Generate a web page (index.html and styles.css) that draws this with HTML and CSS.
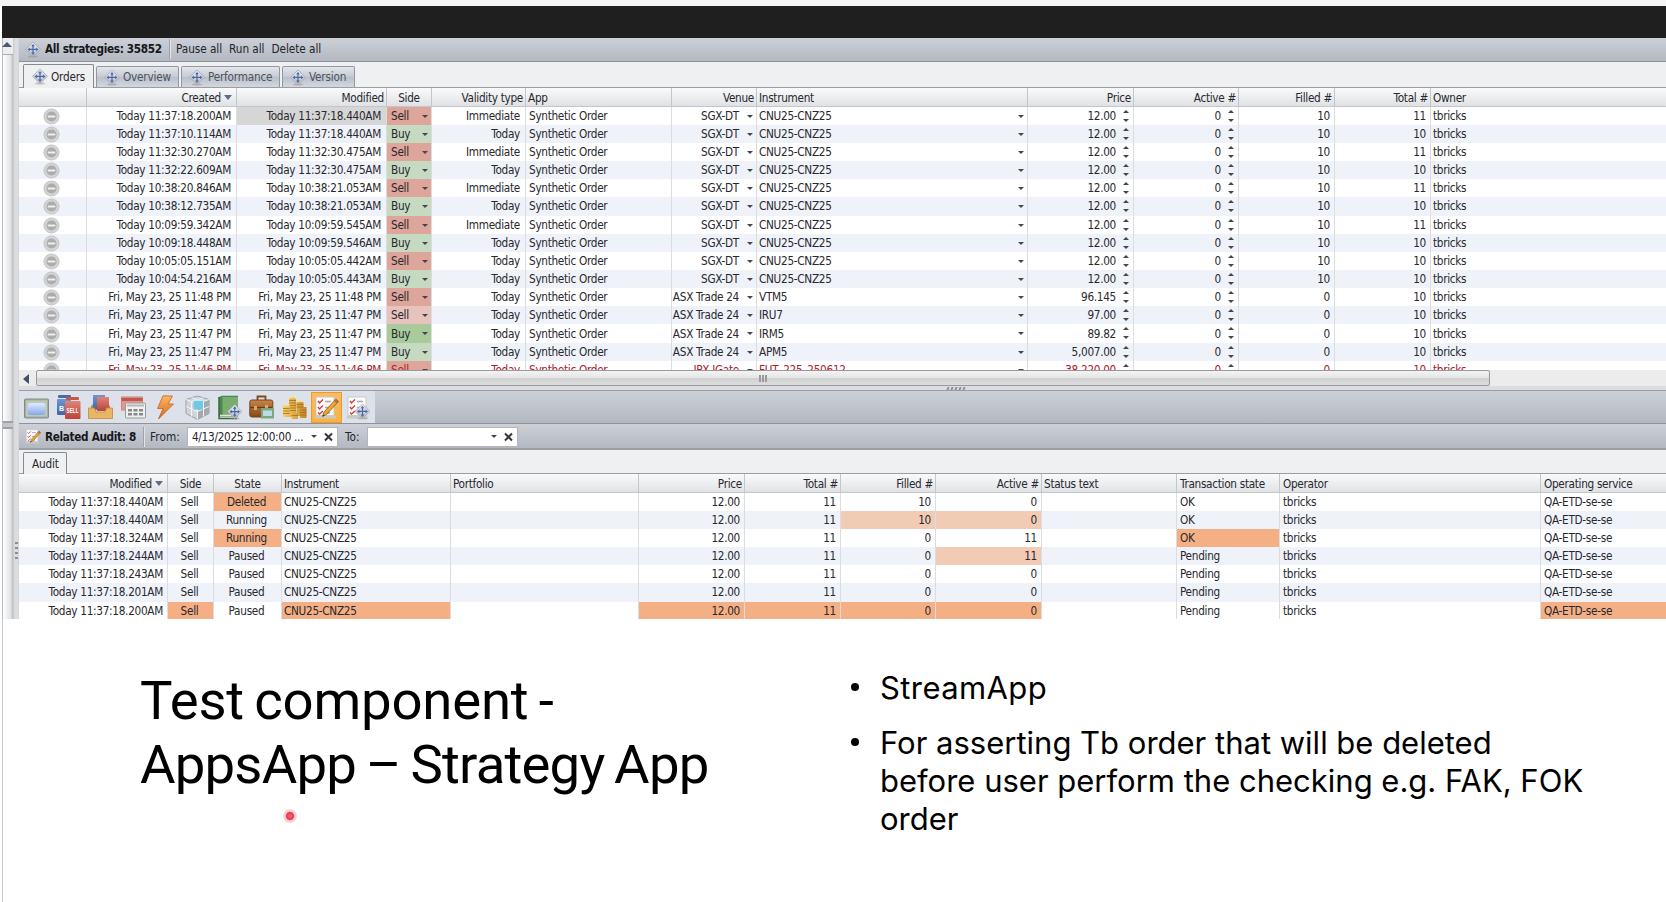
FILE: index.html
```html
<!DOCTYPE html>
<html lang="en">
<head>
<meta charset="utf-8">
<title>Test component - AppsApp – Strategy App</title>
<link rel="stylesheet" href="styles.css">
</head>
<body>
<svg class="defs" aria-hidden="true">
  <defs>
    <linearGradient id="gGray" x1="0" y1="0" x2="0" y2="1"><stop offset="0" stop-color="#eceef0"/><stop offset="1" stop-color="#b4b7bc"/></linearGradient>
    <linearGradient id="gRed" x1="0" y1="0" x2="0" y2="1"><stop offset="0" stop-color="#e08478"/><stop offset="1" stop-color="#bb4238"/></linearGradient>
    <linearGradient id="gBlue" x1="0" y1="0" x2="0" y2="1"><stop offset="0" stop-color="#7295d0"/><stop offset="1" stop-color="#3f66ae"/></linearGradient>
    <linearGradient id="gGold" x1="0" y1="0" x2="1" y2="0"><stop offset="0" stop-color="#f6cf6a"/><stop offset="1" stop-color="#c48722"/></linearGradient>
    <linearGradient id="gBolt" x1="0" y1="0" x2="0" y2="1"><stop offset="0" stop-color="#ffb765"/><stop offset="1" stop-color="#d4661b"/></linearGradient>
    <linearGradient id="gSky" x1="0" y1="0" x2="0" y2="1"><stop offset="0" stop-color="#e0ebff"/><stop offset="1" stop-color="#84a8ea"/></linearGradient>
    <linearGradient id="gBrown" x1="0" y1="0" x2="0" y2="1"><stop offset="0" stop-color="#c8854a"/><stop offset="1" stop-color="#834718"/></linearGradient>
  </defs>
  <symbol id="move" viewBox="0 0 16 16">
    <ellipse cx="8" cy="15" rx="5" ry="1" fill="#888" opacity=".45"/>
    <path d="M8 .5 15.500 7.800 8 15.100 .5 7.800Z" fill="url(#gGray)" stroke="#a3a7ad" stroke-width=".8" stroke-linejoin="round"/>
    <path d="M8 4.200v7.400M4.200 7.900h7.600" stroke="#4868b0" stroke-width="1.200"/>
    <path d="M8 2.400 9.900 4.800H6.100ZM8 13.400 6.100 11H9.900ZM2.500 7.900 4.900 6v3.800ZM13.500 7.900 11.100 6v3.800Z" fill="#4868b0"/>
  </symbol>
  <symbol id="checklist" viewBox="0 0 25 25">
    <path d="M2 2h18v18.500H2Z" fill="#fbfbfb" stroke="#c3c3c3" stroke-width=".8"/>
    <path d="M1 20.500h20l1.500 3H.5Z" fill="#c9c9c9"/>
    <path d="M4 6l1.500 2L9 4.500M4 12l1.500 2L9 10.500M4 17.500l1.500 1.500L9 16" fill="none" stroke="#cc3d38" stroke-width="1.300"/>
    <path d="M11 6.500h6M11 12.500h6M11 18h5" stroke="#a7a7ab" stroke-width="1.500"/>
  </symbol>
  <symbol id="pencil" viewBox="0 0 25 25">
    <path d="M22 4l2.500 2.500L12.500 19.500 8.500 21.500 10 17Z" fill="#eda52f" stroke="#8a5a1c" stroke-width=".8"/>
    <path d="M22 4l2.500 2.500-2 2L20 6Z" fill="#b76b4f"/>
    <path d="M8.500 21.500l.6-1.900 1.500 1Z" fill="#333"/>
  </symbol>
  <symbol id="blocked" viewBox="0 0 18 18">
    <circle cx="9" cy="9" r="8.300" fill="#d4d4d4"/><circle cx="9" cy="9" r="8" fill="none" stroke="#c2c2c2" stroke-width=".8"/>
    <circle cx="9" cy="9" r="5.400" fill="#acacac"/><path d="M5 9h8" stroke="#f1f1f1" stroke-width="2"/>
  </symbol>
</svg>

<div class="edge"></div>
<div class="titlebar"></div>

<div class="app">
  <div class="rail">
    <div class="rail-scroll"><div class="rail-up"></div><div class="rail-thumb"></div></div>
    <div class="rail-split"><i></i><i></i><i></i><i></i></div>
  </div>
  <div class="main">
    <div class="bar bar-top">
      <svg class="ico16"><use href="#move"/></svg>
      <b class="bar-title">All strategies: 35852</b>
      <span class="sep"></span>
      <span class="link">Pause all</span><span class="link">Run all</span><span class="link">Delete all</span>
    </div>
    <div class="tabs">
      <div class="tab on t-orders"><svg class="ico16"><use href="#move"/></svg>Orders</div>
      <div class="tab t-over"><svg class="ico16"><use href="#move"/></svg>Overview</div>
      <div class="tab t-perf"><svg class="ico16"><use href="#move"/></svg>Performance</div>
      <div class="tab t-ver"><svg class="ico16"><use href="#move"/></svg>Version</div>
    </div>
    <div class="grid orders" id="orders"></div>
    <div class="hscroll"><span class="arrow-left"></span><div class="thumb"><i></i><i></i><i></i></div></div>
    <div class="splitter"><i></i><i></i><i></i><i></i><i></i></div>
    <div class="toolbar">
      <div class="tools">
        <svg viewBox="0 0 25 25"><rect x=".5" y="4" width="24" height="19" rx="1" fill="#a4ad9f" stroke="#858b87"/><rect x="2" y="5.500" width="21" height="16" fill="#bdcbb5"/><rect x="3.500" y="8" width="18" height="12" rx="3" fill="url(#gSky)"/></svg>
        <svg viewBox="0 0 25 25"><rect x="2" y="0" width="13" height="3" rx="1" fill="#446cb3"/><rect x="1" y="4" width="14" height="16" rx="1" fill="url(#gBlue)"/><rect x="10" y="2" width="13" height="3" rx="1" fill="#c5564b"/><rect x="9" y="6" width="15.500" height="18" rx="1" fill="url(#gRed)"/><text x="3" y="16" class="tag">B</text><text x="10.600" y="18" class="tag" textLength="12" lengthAdjust="spacingAndGlyphs">SELL</text></svg>
        <svg viewBox="0 0 25 25"><path d="M3 11 5 9h15l2 2v4H3Z" fill="#c18a3d"/><rect x="5" y="0" width="12" height="14" fill="url(#gBlue)"/><rect x="9" y="2" width="12" height="14" fill="url(#gRed)"/><path d="M.5 13h6l1.500 4h9l1.500-4h6v10.500H.5Z" fill="#e9b566" stroke="#c08a3f" stroke-width=".8"/></svg>
        <svg viewBox="0 0 25 25"><rect x=".5" y="2" width="21" height="13" fill="#df9990" stroke="#c8877f"/><path d="M.5 4.500h21" stroke="#c6554d" stroke-width="3"/><rect x="4.500" y="8" width="20" height="15" rx="1" fill="#f0f0f0" stroke="#999"/><path d="M6 10.500h17" stroke="#b7b7b7" stroke-width="2"/><path d="M7 14h4v2.500H7zM12.500 14h4v2.500h-4zM18 14h4v2.500h-4zM7 18h4v2.500H7zM12.500 18h4v2.500h-4zM18 18h4v2.500h-4z" fill="#888"/></svg>
        <svg viewBox="0 0 25 25"><path d="M10 .8 19.500 1 15 9h5.500L5.500 24l4.500-10.500H4.500Z" fill="url(#gBolt)" stroke="#bf6522" stroke-width=".8"/></svg>
        <svg viewBox="0 0 25 25"><path d="M12.500 1 24 4.500v14L12.500 24.500 1 18.500v-14Z" fill="#d2d5d8" stroke="#9da1a5"/><path d="M12.500 8.500 24 4.500v14L12.500 24.500Z" fill="#a5a9ad"/><path d="M1 4.500 12.500 8.500 24 4.500M12.500 8.500v16M1 11.500l11.500 5 11.500-5M6.500 6.500v15M18.500 6.500v15M6.500 2.800l12 3.700M18.500 2.800l-12 3.700" fill="none" stroke="#f3f4f5" stroke-width="1"/><path d="M8.500 6h9.500v8.500H8.500Z" fill="#70c8e7"/><path d="M8.500 6l3-1.500h8L18 6Z" fill="#c0ecf8"/></svg>
        <svg viewBox="0 0 25 25"><path d="M2 2 5 .8h16V22H2Z" fill="#4c8750"/><path d="M5.500 2H21v18H5.500Z" fill="#78ad72"/><path d="M2 22.500h19M3 20.500h17" stroke="#e2e2e2" stroke-width="1.500"/><path d="M2 2v21.500h18" fill="none" stroke="#356c3d" stroke-width="1.500"/><use href="#move" x="10" y="9" width="15.500" height="15.500"/></svg>
        <svg viewBox="0 0 25 25"><path d="M8.500 5V1.500h8V5" fill="none" stroke="#7d4a23" stroke-width="1.800"/><rect x=".8" y="5" width="23" height="17" rx="2" fill="url(#gBrown)" stroke="#784217"/><path d="M1 12.500h22" stroke="#693a16" stroke-width="1.300"/><path d="M5 11h3v4H5zM16 10h3v3h-3z" fill="#dca762"/><rect x="12" y="13" width="13" height="10.500" fill="#7ca87e"/><rect x="14" y="15.500" width="9" height="5.500" fill="#badce9"/></svg>
        <svg viewBox="0 0 25 25"><path d="M7 3h7v19H7zM1 11h7v11H1zM14.500 7h7v14h-7zM18 12h6.500v11H18zM9.500 18h6.500v6H9.500z" fill="url(#gGold)"/><path d="M7 5.500h7M7 8h7M7 10.500h7M8 13h6M8 15.500h6M1 13.500h6.500M1 16h6.500M1 18.500h6.500M14.500 9.500h7M14.500 12h7M18 15h6.500M18 17.500h6.500M18 20h6.500M9.500 20.500h6.500" stroke="#a66d1b" stroke-width=".8"/><path d="M7 3.300q3.500-2 7 0M1 11q3.500-2 6.500 0M14.500 7q3.500-2 7 0" stroke="#f8df8e" stroke-width="1.400" fill="none"/></svg>
        <span class="active"><svg viewBox="0 0 25 25"><use href="#checklist" width="25" height="25"/><use href="#pencil" width="25" height="25"/></svg></span>
        <svg viewBox="0 0 25 25"><use href="#checklist" width="25" height="25"/><use href="#move" x="8.500" y="8.500" width="16" height="16"/></svg>
      </div>
    </div>
    <div class="bar bar-filter">
      <svg class="ico16" viewBox="0 0 25 25"><use href="#checklist" width="25" height="25"/><use href="#pencil" width="25" height="25"/></svg>
      <b class="bar-title">Related Audit: 8</b>
      <span class="sep"></span>
      <span class="lbl">From:</span>
      <span class="field">4/13/2025 12:00:00 ...<i class="dd"></i><svg class="x" viewBox="0 0 10 10"><path d="M1.500 1.500l7 7M8.500 1.500l-7 7"/></svg></span>
      <span class="lbl">To:</span>
      <span class="field"><i class="dd"></i><svg class="x" viewBox="0 0 10 10"><path d="M1.500 1.500l7 7M8.500 1.500l-7 7"/></svg></span>
    </div>
    <div class="tabs tabs-audit"><div class="tab on t-audit">Audit</div></div>
    <div class="grid audit" id="audit"></div>
  </div>
</div>

<div class="slide">
  <h1><span class="h-a">Test component -</span><br><span class="h-b">AppsApp – Strategy App</span></h1>
  <ul>
    <li class="wide">StreamApp</li>
    <li>For asserting Tb order that will be deleted<br>before user perform the checking e.g. FAK, FOK<br>order</li>
  </ul>
  <div class="laser"></div>
</div>
<script src="rows.js"></script>
</body>
</html>
```

FILE: styles.css
```css
* { box-sizing: border-box; }
body { margin: 0; width: 1666px; height: 902px; overflow: hidden; background: #fff; color: #28282e; font: 11.7px/18px "DejaVu Sans Condensed", "DejaVu Sans", sans-serif; letter-spacing: -0.3px; white-space: nowrap; position: relative; }
.defs { position: absolute; width: 0; height: 0; }
.edge { height: 6px; background: #f4f4f4; }
.titlebar { height: 32px; margin-left: 2px; background: #1f1f1f; }
.app { display: flex; height: 581px; margin-left: 2px; overflow: hidden; }

.rail { width: 17px; flex: none; display: flex; background: #d9dade; border-left: 1px solid #b9bcc0; }
.rail-scroll { width: 10px; display: flex; flex-direction: column; background: linear-gradient(90deg, #fff, #dfe1e3 80%, #b5b7ba); }
.rail-up { height: 17px; background: #eceef1; border-bottom: 1px solid #a9abae; }
.rail-up::before { content: ""; display: block; width: 0; margin: 4px 0 0 -1px; border: 5px solid transparent; border-top: 0; border-bottom: 5px solid #4c5873; }
.rail-thumb { margin-top: 366px; height: 8px; border: solid #9ca0a7; border-width: 2px 0; background: #c3c6ca; }
.rail-split { flex: 1; display: flex; flex-direction: column; gap: 3px; padding: 504px 0 0 2px; background: linear-gradient(90deg, #c7c9cd, #dcdde1 35%, #dcdde1 85%, #c9cbd0); }
.rail-split i { width: 3px; height: 2px; background: #8d8f94; flex: none; }

.main { flex: 1; min-width: 0; display: flex; flex-direction: column; }
.bar { display: flex; align-items: center; flex: none; background: linear-gradient(#cdd0d7, #b3b8c1); color: #24242b; }
.bar-top { height: 24px; padding: 0 0 1px 6px; border-bottom: 1px solid #8d9197; }
.bar-title { font-size: 11.7px; letter-spacing: -0.33px; color: #17171c; margin-left: 4px; width: 119px; }
.ico16 { width: 16px; height: 17px; flex: none; }
.sep { width: 2px; height: 20px; border-left: 1px solid #9ea2aa; background: #e2e4e8; margin: 0 5px 0 5px; }
.link { margin-right: 7px; letter-spacing: -0.05px; }

.tabs { display: flex; align-items: flex-end; height: 26px; flex: none; padding-left: 4px; background: #eff0f2; border-bottom: 1px solid #9b9da1; }
.tab { display: flex; align-items: center; height: 21px; margin-left: 2px; border: 1px solid #94979c; border-bottom: 0; border-radius: 2px 2px 0 0; background: linear-gradient(#e3e6eb, #c4cad4 50%, #b9c0cb 51%, #d3d8df); color: #50525a; gap: 3px; padding-left: 7px; letter-spacing: -0.2px; }
.tab.on { height: 24px; margin: 0 0 -1px; background: #eff0f2; color: #28282e; border: 1px solid #85888c; border-bottom: 0; padding-left: 8px; z-index: 1; }
.t-orders { width: 71px; }
.t-over { width: 83px; }
.t-perf { width: 99px; }
.t-ver { width: 73px; }
.tabs-audit { height: 24px; }
.tab.t-audit { width: 44px; height: 22px; padding-left: 8px; }

.grid { flex: none; overflow: hidden; background: #fff; }
.orders { height: 282px; }
.audit { flex: 1; }
.row { display: grid; height: 18.17px; }
.row:nth-child(odd) { background: #eff3f9; }
.orders .row { grid-template-columns: 68px 150px 150px 45px 94px 146px 85px 271px 106px 105px 96px 96px 1fr; }
.audit .row { grid-template-columns: 149px 46px 68px 169px 188px 106px 96px 95px 106px 135px 103px 261px 1fr; }
.grid .row.head { height: 18.6px; background: linear-gradient(#fafafb, #dfe2e5); border-bottom: 1px solid #c3c6ca; }
.cell { position: relative; display: flex; align-items: center; border-right: 1px solid #dcdde0; padding: 1px 4px 0 2px; overflow: hidden; line-height: 17px; min-width: 0; }
.cell:last-child { border-right: 0; }
.grid .head .cell { padding: 3px 2px 0 2px; border-color: #c2c5c9; }
.audit .cell:nth-child(n+11) { padding-left: 3px; }
.r { justify-content: flex-end; }
.c { justify-content: center; }
.orders .cell.menu { padding-right: 17px; }
.orders .cell.spin { padding-right: 17px; }
.orders .cell:nth-child(2), .orders .cell:nth-child(3), .orders .cell:nth-child(5) { padding-right: 5px; }
.orders .cell:nth-child(4) { padding-left: 4px; }
.orders .cell:nth-child(6) { padding-left: 3px; }
.orders .head .cell:nth-child(n) { padding: 3px 2px 0 2px; }
.menu::after, .dd { content: ""; border: 3px solid transparent; border-top: 3.5px solid #44464b; border-bottom: 0; }
.menu::after { position: absolute; right: 3px; top: 8px; }
.spin::before, .spin::after { content: ""; position: absolute; right: 4px; border: 3px solid transparent; }
.spin::before { top: 3px; border-top: 0; border-bottom: 3.5px solid #44464b; }
.spin::after { top: 12px; border-bottom: 0; border-top: 3.5px solid #44464b; }
.sort::after { content: ""; margin: 0 2px 1px 3px; border: 4px solid transparent; border-top: 5px solid #5f6c86; border-bottom: 0; }
.sell { background: #dea59a; }
.sell2 { background: #e8c3be; }
.buy { background: #c6dac2; }
.buy2 { background: #a9cb9c; }
.sel { background: #d6d6d6; }
.hot { background: #f4b084; }
.warm { background: #f2cbb4; }
.late { color: #a8222c; }
.blocked { width: 17px; height: 17px; flex: none; }

.hscroll { display: flex; height: 16px; flex: none; background: #ececed; }
.arrow-left { width: 0; margin: 4px 7px 0 4px; border: 5px solid transparent; border-right: 6px solid #43506d; border-left: 0; height: 0; }
.thumb { display: flex; justify-content: center; align-items: center; gap: 1px; width: 1454px; height: 16px; border: 1px solid #97999c; border-radius: 2px; background: linear-gradient(#f3f3f3, #e6e6e6 48%, #cfd0d0 52%, #dedede); }
.thumb i { width: 2px; height: 7px; background: #9b9b9d; }
.splitter { display: flex; justify-content: center; gap: 2px; height: 5px; flex: none; padding: 1px 0 0 226px; background: #dcdde2; border-bottom: 1px solid #9a9da3; }
.splitter i { width: 2px; height: 3px; background: #8b8d92; transform: skewX(-20deg); }
.toolbar { height: 33px; flex: none; background: linear-gradient(#cdd0d7, #b3b8c1); border-bottom: 1px solid #8f9399; }
.tools { display: flex; align-items: center; width: 356px; height: 32px; padding-left: 5px; gap: 7.2px; background: #dde1e9; }
.tools svg { width: 25px; height: 25px; flex: none; }
.active { display: flex; align-items: center; justify-content: center; width: 31px; height: 31px; margin: 0 -3px; background: linear-gradient(#f6bd68, #ffb13a); border: 1px solid #e99b2c; flex: none; }
.tag { font: bold 7px "Liberation Sans", sans-serif; fill: #fff; letter-spacing: 0; }
.bar-filter { height: 26px; padding-left: 6px; border-bottom: 2px solid #9a9ea5; padding-top: 1px; }
.bar-filter .bar-title { width: 93px; }
.lbl { margin-right: 7px; letter-spacing: 0.1px; }
.field { display: flex; align-items: center; width: 151px; height: 20px; margin-right: 7px; padding: 0 3px 0 4px; background: #fff; border: 1px solid #b3b7bd; letter-spacing: -0.3px; }
.dd { margin-left: auto; }
.x { width: 11px; height: 10px; margin-left: 6px; }
.x path { stroke: #34363b; stroke-width: 2; fill: none; }

.slide { position: relative; display: flex; height: 283px; margin-left: 2px; border-left: 1px solid #c9c9c9; color: #000; font-family: Roboto, sans-serif; letter-spacing: 0; }
h1 { margin: 49px 0 0 137px; width: 711px; font-weight: 400; font-size: 54.5px; line-height: 64px; word-spacing: -3px; }
.h-a { letter-spacing: -0.2px; }
.h-b { letter-spacing: -0.8px; }
ul { list-style: none; margin: 50px 0 0; padding: 0; font-family: Inter, Roboto, sans-serif; font-size: 31px; line-height: 38px; letter-spacing: 0; }
li { position: relative; padding-left: 29px; margin-bottom: 17px; }
li::before { content: ""; position: absolute; left: 0; top: 14px; width: 8px; height: 8px; border-radius: 50%; background: #000; }
.wide { letter-spacing: 0.4px; }
.laser { position: absolute; left: 280px; top: 190px; width: 14px; height: 14px; border-radius: 50%; background: radial-gradient(circle, #ea5f70 0 1px, #e23a50 3.5px, #f6bcc6 4.5px, #fbe3e8 7px); }
```

FILE: rows.js
```js
const BLOCKED = '<svg class="blocked"><use href="#blocked"/></svg>';

function fill(id, head, rows) {
  const line = (cells, cls) => `<div class="row ${cls}">` +
    cells.map(([text, c]) => `<div class="cell ${c || ''}">${text}</div>`).join('') + '</div>';
  document.getElementById(id).innerHTML =
    line(head, 'head') + rows.map(([cells, cls]) => line(cells, cls || '')).join('');
}

const today = [
  ['11:37:18.200', '11:37:18.440'], ['11:37:10.114', '11:37:18.440'],
  ['11:32:30.270', '11:32:30.475'], ['11:32:22.609', '11:32:30.475'],
  ['10:38:20.846', '10:38:21.053'], ['10:38:12.735', '10:38:21.053'],
  ['10:09:59.342', '10:09:59.545'], ['10:09:18.448', '10:09:59.546'],
  ['10:05:05.151', '10:05:05.442'], ['10:04:54.216', '10:05:05.443']
].map(([a, b], i) => {
  const sell = i % 2 === 0, imm = sell && i < 8;
  return [`Today ${a}AM`, `Today ${b}AM`, sell ? 'Sell' : 'Buy', sell ? 'sell' : 'buy',
    imm ? 'Immediate' : 'Today', 'SGX-DT', 'CNU25-CNZ25', '12.00', '10', imm ? '11' : '10'];
});
const friday = [
  ['48', 'Sell', 'sell', 'ASX Trade 24', 'VTM5', '96.145'],
  ['47', 'Sell', 'sell2', 'ASX Trade 24', 'IRU7', '97.00'],
  ['47', 'Buy', 'buy2', 'ASX Trade 24', 'IRM5', '89.82'],
  ['47', 'Buy', 'buy', 'ASX Trade 24', 'APM5', '5,007.00'],
  ['46', 'Sell', 'sell', 'JPX JGate', 'FUT_225_250612', '38,220.00']
].map(([m, side, cls, venue, ins, price]) => {
  const t = `Fri, May 23, 25 11:${m} PM`;
  return [t, t, side, cls, 'Today', venue, ins, price, '0', '10'];
});

fill('orders', [
  ['', ''], ['Created', 'r sort'], ['Modified', 'r'], ['Side', 'c'], ['Validity type', 'r'], ['App'],
  ['Venue', 'r'], ['Instrument'], ['Price', 'r'], ['Active #', 'r'], ['Filled #', 'r'], ['Total #', 'r'], ['Owner']
], [...today, ...friday].map(([a, b, side, cls, val, venue, ins, price, filled, total], i) => [[
  [BLOCKED, 'c'], [a, 'r'], [b, i === 0 ? 'r sel' : 'r'], [side, 'menu ' + cls], [val, 'r'],
  ['Synthetic Order'], [venue, 'r menu'], [ins, 'menu'], [price, 'r spin'], ['0', 'r spin'],
  [filled, 'r'], [total, 'r'], ['tbricks']
], i === 14 ? 'late' : '']));

const audit = [
  ['440', 'Deleted', '10', '0', 'OK', { 2: 'hot' }],
  ['440', 'Running', '10', '0', 'OK', { 7: 'warm', 8: 'warm' }],
  ['324', 'Running', '0', '11', 'OK', { 2: 'hot', 10: 'hot' }],
  ['244', 'Paused', '0', '11', 'Pending', { 8: 'warm' }],
  ['243', 'Paused', '0', '0', 'Pending', {}],
  ['201', 'Paused', '0', '0', 'Pending', {}],
  ['200', 'Paused', '0', '0', 'Pending', { 1: 'hot', 3: 'hot', 5: 'hot', 6: 'hot', 7: 'hot', 8: 'hot', 12: 'hot' }]
];
fill('audit', [
  ['Modified', 'r sort'], ['Side', 'c'], ['State', 'c'], ['Instrument'], ['Portfolio'], ['Price', 'r'],
  ['Total #', 'r'], ['Filled #', 'r'], ['Active #', 'r'], ['Status text'], ['Transaction state'],
  ['Operator'], ['Operating service']
], audit.map(([ms, state, filled, active, tx, marks]) => [[
  [`Today 11:37:18.${ms}AM`, 'r'], ['Sell', 'c'], [state, 'c'], ['CNU25-CNZ25'], [''], ['12.00', 'r'],
  ['11', 'r'], [filled, 'r'], [active, 'r'], [''], [tx], ['tbricks'], ['QA-ETD-se-se']
].map(([t, c], i) => [t, (c || '') + ' ' + (marks[i] || '')])]));
```
